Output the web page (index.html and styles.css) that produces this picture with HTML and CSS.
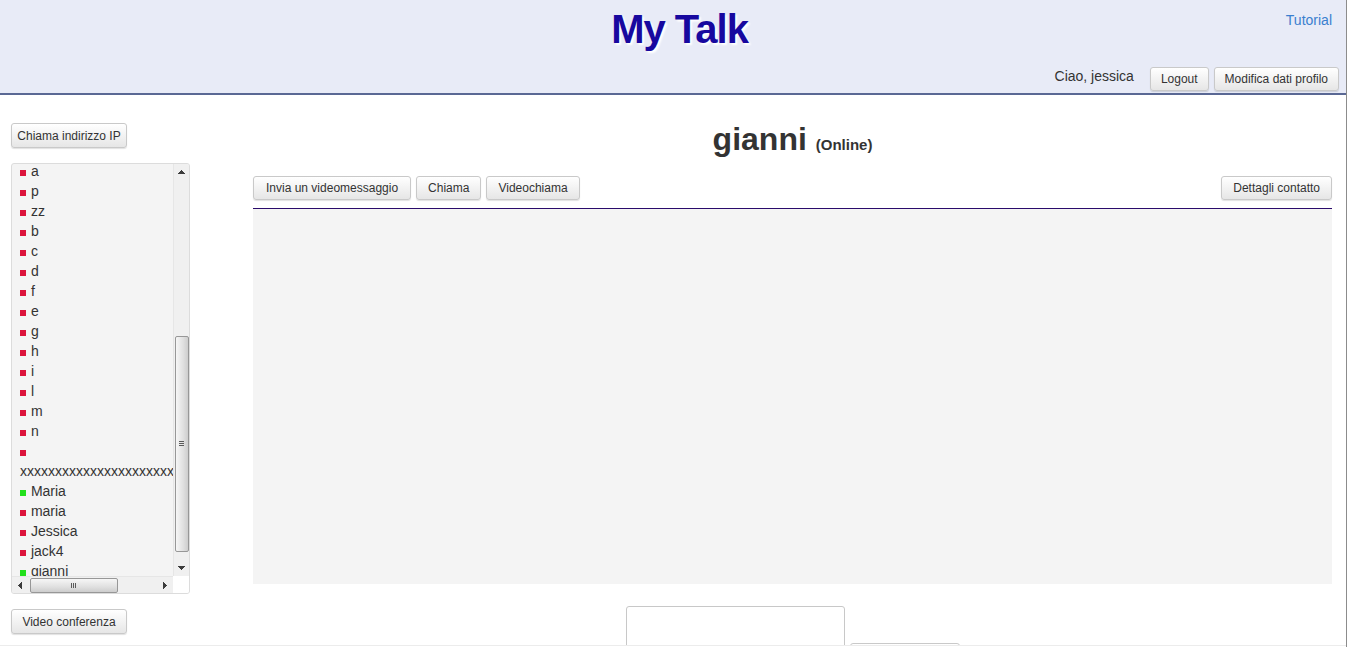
FILE: index.html
```html
<!DOCTYPE html>
<html lang="it">
<head>
<meta charset="utf-8">
<title>My Talk</title>
<link rel="stylesheet" href="styles.css">
</head>
<body>
<div class="viewport">
  <div class="page">
    <header class="topbar">
      <div class="topbar-main">
        <span></span>
        <h1 class="brand">My Talk</h1>
        <a class="tutorial" href="#">Tutorial</a>
      </div>
      <div class="userbar">
        <span class="greeting">Ciao, jessica</span>
        <button class="btn btn-head">Logout</button>
        <button class="btn btn-head">Modifica dati profilo</button>
      </div>
    </header>
    <div class="layout">
      <aside class="sidebar">
        <button class="btn btn-side">Chiama indirizzo IP</button>
        <div class="contact-box">
          <div class="contact-view">
            <ul class="contacts">
              <li><span class="dot off"></span> a</li>
              <li><span class="dot off"></span> p</li>
              <li><span class="dot off"></span> zz</li>
              <li><span class="dot off"></span> b</li>
              <li><span class="dot off"></span> c</li>
              <li><span class="dot off"></span> d</li>
              <li><span class="dot off"></span> f</li>
              <li><span class="dot off"></span> e</li>
              <li><span class="dot off"></span> g</li>
              <li><span class="dot off"></span> h</li>
              <li><span class="dot off"></span> i</li>
              <li><span class="dot off"></span> l</li>
              <li><span class="dot off"></span> m</li>
              <li><span class="dot off"></span> n</li>
              <li><span class="dot off"></span> xxxxxxxxxxxxxxxxxxxxxxxxxxxxxxxxx</li>
              <li><span class="dot on"></span> Maria</li>
              <li><span class="dot off"></span> maria</li>
              <li><span class="dot off"></span> Jessica</li>
              <li><span class="dot off"></span> jack4</li>
              <li><span class="dot on"></span> gianni</li>
            </ul>
          </div>
          <div class="vscroll">
            <span class="sb-btn sb-up"></span>
            <div class="sb-track sb-track-v"><span class="sb-thumb sb-thumb-v" style="margin-top:156px;height:216px"></span></div>
            <span class="sb-btn sb-down"></span>
          </div>
          <div class="hscroll">
            <span class="sb-btn sb-left"></span>
            <div class="sb-track sb-track-h"><span class="sb-thumb sb-thumb-h" style="margin-left:2px;width:88px"></span></div>
            <span class="sb-btn sb-right"></span>
          </div>
          <div class="sb-corner"></div>
        </div>
        <button class="btn btn-side btn-conf">Video conferenza</button>
      </aside>
      <main class="chat">
        <h2 class="contact-name">gianni <small>(Online)</small></h2>
        <div class="actions">
          <div class="action-group">
            <button class="btn btn-wide">Invia un videomessaggio</button>
            <button class="btn">Chiama</button>
            <button class="btn">Videochiama</button>
          </div>
          <button class="btn">Dettagli contatto</button>
        </div>
        <div class="messages"></div>
        <div class="composer">
          <textarea class="message-input"></textarea>
          <button class="btn btn-send" aria-label="Invia"></button>
        </div>
      </main>
    </div>
  </div>
  <div class="edge"></div>
</div>
</body>
</html>
```

FILE: styles.css
```css
* { box-sizing: border-box; }

html, body {
  margin: 0;
  padding: 0;
  background: #fff;
  overflow: hidden;
}

body {
  font-family: "Liberation Sans", Arial, sans-serif;
  font-size: 14px;
  color: #333;
}

.viewport {
  display: flex;
  width: 1349px;
  height: 647px;
}

.page {
  flex: 0 0 1346px;
  height: 646px;
  overflow: hidden;
  border-bottom: 1px solid #ececec;
}

.edge {
  flex: 0 0 1px;
  background: #8c8c8c;
}

/* Header */
.topbar {
  height: 95px;
  background: #e8ebf7;
  border-bottom: 2px solid #5a6894;
}

.topbar-main {
  display: grid;
  grid-template-columns: 1fr auto 1fr;
  align-items: start;
  height: 67px;
}

.brand {
  margin: 6px 0 0;
  padding-left: 13px;
  font-size: 40px;
  line-height: 46px;
  letter-spacing: -1px;
  font-weight: bold;
  color: #17089f;
  text-shadow: 2px 2px 2px #fff;
}

.tutorial {
  justify-self: end;
  margin: 12px 14px 0 0;
  font-size: 14px;
  line-height: 16px;
  color: #3a7fcf;
  text-decoration: none;
}

.userbar {
  display: flex;
  justify-content: flex-end;
  align-items: center;
  gap: 5px;
  height: 24px;
  padding-right: 7px;
}

.greeting {
  margin-right: 11px;
  font-size: 14px;
  line-height: 16px;
  position: relative;
  top: -3px;
  color: #333;
}

/* Buttons */
.btn {
  height: 24px;
  padding: 0 11px;
  font-family: "Liberation Sans", Arial, sans-serif;
  font-size: 12px;
  color: #333;
  background: linear-gradient(#ffffff, #e6e6e6);
  border: 1px solid #c9c9c9;
  border-radius: 3px;
  box-shadow: 0 1px 1px rgba(0, 0, 0, 0.12);
  white-space: nowrap;
  cursor: pointer;
}

.btn-head {
  padding: 0 10px;
}

.btn-wide {
  padding: 0 12px;
}

/* Layout */
.layout {
  display: flex;
}

.sidebar {
  flex: 0 0 253px;
  display: flex;
  flex-direction: column;
  align-items: flex-start;
  padding: 28px 0 0 11px;
}

.btn-side {
  width: 116px;
  height: 25px;
  padding: 0;
}

/* Contact list with its scrollbars */
.contact-box {
  display: grid;
  grid-template-columns: 1fr 16px;
  grid-template-rows: 1fr 17px;
  width: 179px;
  height: 431px;
  margin-top: 15px;
  background: #f4f4f4;
  border: 1px solid #dcdcdc;
  border-radius: 3px;
  overflow: hidden;
}

.contact-view {
  overflow: hidden;
  min-width: 0;
}

.contacts {
  list-style: none;
  margin: -3px 0 0;
  padding: 0;
  font-size: 14px;
  line-height: 20px;
  color: #333;
}

.contacts li {
  padding-left: 8px;
}

.dot {
  display: inline-block;
  width: 6px;
  height: 6px;
  margin-right: 1px;
}

.dot.off { background: #dc143c; }
.dot.on { background: #22e01c; }

.vscroll {
  display: flex;
  flex-direction: column;
  background: #f0f0f0;
  border-left: 1px solid #e6e6e6;
}

.hscroll {
  display: flex;
  background: #f0f0f0;
  border-top: 1px solid #e6e6e6;
}

.sb-btn {
  flex: 0 0 16px;
  background-repeat: no-repeat;
  background-position: center;
}

.sb-up {
  background-image: conic-gradient(from 139deg at 50% 0, #3c3c3c 0 82deg, transparent 0);
  background-size: 7px 4px;
}

.sb-down {
  background-image: conic-gradient(from -41deg at 50% 100%, #3c3c3c 0 82deg, transparent 0);
  background-size: 7px 4px;
}

.sb-left {
  background-image: conic-gradient(from 49deg at 0 50%, #3c3c3c 0 82deg, transparent 0);
  background-size: 4px 7px;
}

.sb-right {
  background-image: conic-gradient(from 229deg at 100% 50%, #3c3c3c 0 82deg, transparent 0);
  background-size: 4px 7px;
}

.sb-track {
  flex: 1 1 auto;
  display: flex;
  min-width: 0;
  min-height: 0;
}

.sb-track-v {
  flex-direction: column;
  align-items: center;
}

.sb-track-h {
  align-items: center;
}

.sb-thumb {
  display: flex;
  align-items: center;
  justify-content: center;
  flex: 0 0 auto;
  border: 1px solid #979797;
  border-radius: 2px;
}

.sb-thumb-v {
  width: 14px;
  background: linear-gradient(to right, #f6f6f6, #e0e0e0 60%, #cdcdcd);
}

.sb-thumb-v::after {
  content: "";
  width: 5px;
  height: 6px;
  background: repeating-linear-gradient(#5a5a5a 0 1px, transparent 1px 2px);
}

.sb-thumb-h {
  height: 15px;
  background: linear-gradient(#f6f6f6, #e0e0e0 60%, #cdcdcd);
}

.sb-thumb-h::after {
  content: "";
  width: 6px;
  height: 5px;
  background: repeating-linear-gradient(to right, #5a5a5a 0 1px, transparent 1px 2px);
}

.sb-corner {
  background: #fff;
}

.btn-conf {
  margin-top: 15px;
}

/* Main chat column */
.chat {
  flex: 1 1 auto;
  margin-right: 14px;
  min-width: 0;
}

.contact-name {
  margin: 26px 0 0;
  text-align: center;
  font-size: 32px;
  line-height: 36px;
  font-weight: bold;
  color: #333;
}

.contact-name small {
  font-size: 15px;
  font-weight: bold;
}

.actions {
  display: flex;
  justify-content: space-between;
  margin-top: 13px;
}

.action-group {
  display: flex;
  gap: 5px;
}

.messages {
  margin-top: 8px;
  height: 376px;
  background: #f4f4f4;
  border-top: 1px solid #2a0b6b;
}

.composer {
  display: flex;
  justify-content: center;
  align-items: flex-start;
  gap: 5px;
  margin-top: 22px;
}

.message-input {
  width: 219px;
  height: 70px;
  border: 1px solid #c8c8c8;
  border-radius: 3px;
  resize: none;
  background: #fff;
}

.btn-send {
  width: 110px;
  height: 26px;
  margin-top: 37px;
}
```
